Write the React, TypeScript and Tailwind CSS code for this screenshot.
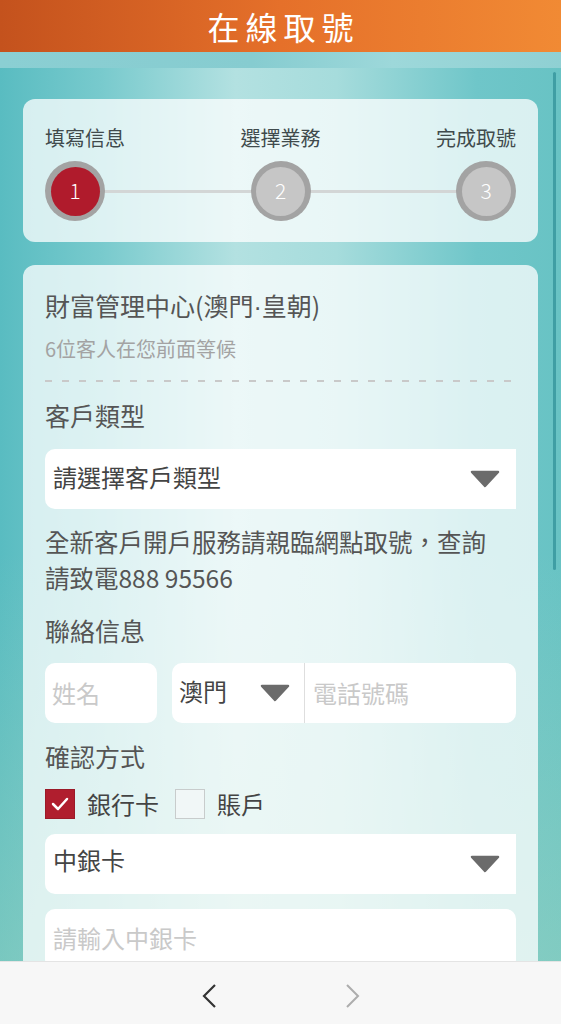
import React from 'react';

const FONT = { fontFamily: '"Noto Sans CJK TC", "Noto Sans", sans-serif' };

function Caret({ className = '' }: { className?: string }) {
  return (
    <svg width="30" height="18" viewBox="0 0 30 18" className={className}>
      <path d="M2 2 H28 L15 16 Z" fill="#6b6b6b" stroke="#6b6b6b" strokeWidth="2.5" strokeLinejoin="round" />
    </svg>
  );
}

function Step({ n, active }: { n: number; active?: boolean }) {
  return (
    <div className="relative z-10 flex h-[60px] w-[60px] items-center justify-center rounded-full bg-[#a3a3a3]">
      <div
        className={`flex h-[49px] w-[49px] items-center justify-center rounded-full text-[21px] font-light text-white ${
          active ? 'bg-[#b01b2c]' : 'bg-[#c6c6c6]'
        }`}>
        {n}
      </div>
    </div>
  );
}

export default function App() {
  return (
    <div className="flex h-[1024px] w-full flex-col overflow-hidden" style={FONT}>
      <header className="flex h-[52px] shrink-0 items-center justify-center bg-[linear-gradient(90deg,#c4521d,#e5702a_50%,#f18a34)]">
        <h1 className="pl-[6px] text-[32px] leading-none tracking-[6px] text-white">在線取號</h1>
      </header>

      <main className="relative flex-1 overflow-hidden bg-[linear-gradient(180deg,transparent_55%,rgba(160,214,190,0.45)_100%),linear-gradient(90deg,#59bcc1_0%,#78cacd_18%,#b3e1e1_42%,#a6dcdc_60%,#6fc6c9_85%,#68c3c4_100%)]">
        <div className="h-[16px] bg-[linear-gradient(90deg,#8bcfd3,#86ccd0_45%,#9dd8da_70%,#8fd0d3)]" />
        <div className="absolute right-[5px] top-[20px] h-[498px] w-[3px] rounded bg-[#3f9ea4]" />

        <div className="px-[23px] pt-[31px]">
          {/* steps */}
          <section className="rounded-[12px] bg-white/75 px-[22px] pb-[21px] pt-[25px]">
            <div className="flex justify-between text-[20px] leading-[28px] text-[#404a4c]">
              <span>填寫信息</span>
              <span>選擇業務</span>
              <span>完成取號</span>
            </div>
            <div className="relative mt-[9px] flex items-center justify-between">
              <div className="absolute left-[30px] right-[30px] top-[29px] h-[3px] bg-[#d3d6d6]" />
              <Step n={1} active />
              <Step n={2} />
              <Step n={3} />
            </div>
          </section>

          {/* form */}
          <section className="mt-[23px] rounded-[12px] bg-white/75 px-[22px] pb-[40px] pt-[24px] text-[#555]">
            <p className="text-[25px] leading-[32px]">
              財富管理中心(澳門<span style={{ fontFamily: '"Liberation Sans", sans-serif' }}>·</span>皇朝)
            </p>
            <p className="mt-[12px] text-[20px] leading-[28px] text-[#a3a3a3]">6位客人在您前面等候</p>
            <div className="mt-[17px] h-[2px] bg-[repeating-linear-gradient(90deg,#c9c9c9_0_7px,transparent_7px_17px)]" />

            <p className="mt-[17px] text-[25px] leading-[32px]">客戶類型</p>
            <div className="mt-[18px] flex h-[60px] items-center justify-between rounded-l-[10px] bg-white pl-[8px] pr-[16px]">
              <span className="-mt-[5px] text-[24px] text-[#444]">請選擇客戶類型</span>
              <Caret />
            </div>

            <p className="mt-[15px] text-[24.5px] leading-[36px]">
              全新客戶開戶服務請親臨網點取號，查詢
              <br />
              請致電888 95566
            </p>

            <p className="mt-[18px] text-[25px] leading-[32px]">聯絡信息</p>
            <div className="mt-[17px] flex h-[60px] gap-[15px]">
              <div className="flex w-[112px] items-center rounded-[10px] bg-white pl-[7px] text-[24px] text-[#c9c9c9]">姓名</div>
              <div className="flex flex-1 rounded-[10px] bg-white">
                <div className="flex w-[133px] items-center justify-between border-r border-[#dedede] pl-[7px] pr-[14px]">
                  <span className="-mt-[4px] text-[24px] text-[#444]">澳門</span>
                  <Caret />
                </div>
                <div className="flex items-center pl-[8px] text-[24px] text-[#c9c9c9]">電話號碼</div>
              </div>
            </div>

            <p className="mt-[17px] text-[25px] leading-[32px]">確認方式</p>
            <div className="mt-[17px] flex h-[30px] items-center text-[24px] text-[#444]">
              <span className="flex h-[30px] w-[30px] items-center justify-center border border-[#9a1a28] bg-[#b01e2e]">
                <svg width="18" height="14" viewBox="0 0 18 14">
                  <path d="M2 7 L7 12 L16 2" fill="none" stroke="white" strokeWidth="2.5" strokeLinecap="round" strokeLinejoin="round" />
                </svg>
              </span>
              <span className="ml-[12px]">銀行卡</span>
              <span className="ml-[16px] h-[30px] w-[30px] border border-[#c8cccc] bg-[#f1f7f7]" />
              <span className="ml-[12px]">賬戶</span>
            </div>

            <div className="mt-[15px] flex h-[60px] items-center justify-between rounded-l-[10px] bg-white pl-[8px] pr-[16px]">
              <span className="-mt-[9px] text-[24px] text-[#444]">中銀卡</span>
              <Caret />
            </div>

            <div className="mt-[15px] flex h-[60px] items-center rounded-[10px] bg-white pl-[8px]">
              <span className="-mt-[2px] text-[24px] text-[#c9c9c9]">請輸入中銀卡</span>
            </div>
          </section>
        </div>
      </main>

      <footer className="flex h-[63px] shrink-0 items-center justify-center gap-[128px] border-t border-[#e4e4e4] bg-[#f7f7f7]">
        <svg width="16" height="26" viewBox="0 0 16 26" className="mt-[6px]">
          <polyline points="14,2 3,13 14,24" fill="none" stroke="#333" strokeWidth="2.2" />
        </svg>
        <svg width="16" height="26" viewBox="0 0 16 26" className="mt-[6px]">
          <polyline points="2,2 13,13 2,24" fill="none" stroke="#adadad" strokeWidth="2" />
        </svg>
      </footer>
    </div>
  );
}
